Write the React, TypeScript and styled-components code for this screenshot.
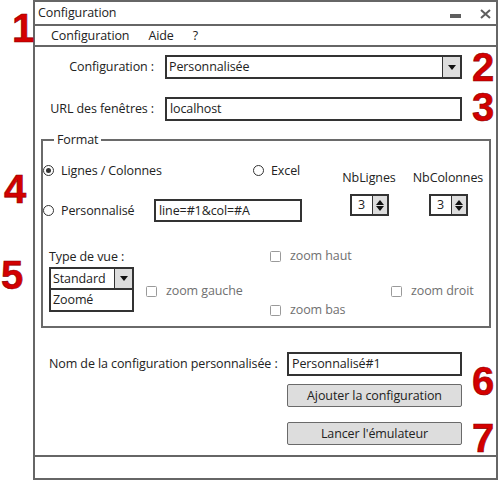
import React from "react";
import styled, { createGlobalStyle } from "styled-components";

const FONT = `"Open Sans", "Liberation Sans", sans-serif`;

const Global = createGlobalStyle`
  html, body { margin: 0; padding: 0; background: #fff; }
  body { font-family: ${FONT}; font-size: 12.5px; letter-spacing: -0.1px; color: #222; }
  * { box-sizing: border-box; }
`;

const Page = styled.div`
  position: relative;
  width: 498px;
  height: 480px;
  overflow: hidden;
`;

const Window = styled.div`
  margin-left: 33px;
  width: 465px;
  height: 480px;
  border: 2px solid #666;
  display: flex;
  flex-direction: column;
  background: #fff;
`;

const TitleBar = styled.div`
  height: 24px;
  border-bottom: 2px solid #666;
  display: flex;
  align-items: center;
  justify-content: space-between;
  padding: 0 5px 0 3px;
`;

const Title = styled.span`
  line-height: 16px;
`;

const WinControls = styled.div`
  display: flex;
  align-items: flex-start;
  gap: 19px;
  height: 22px;
`;

const MinIcon = styled.span`
  display: block;
  width: 11px;
  height: 4px;
  margin-top: 12px;
  background: #5e5e5e;
`;

const CloseIcon = styled.svg`
  display: block;
  margin-top: 7px;
`;

const MenuBar = styled.div`
  height: 21px;
  border-bottom: 2px solid #666;
  display: flex;
  align-items: center;
  gap: 19px;
  padding-left: 16px;
`;

const MenuItem = styled.span`
  line-height: 16px;
`;

const Content = styled.div`
  flex: 1;
  display: flex;
  flex-direction: column;
  padding-top: 8px;
`;

const FormGrid = styled.div`
  display: grid;
  grid-template-columns: 119px 297px;
  column-gap: 11px;
  row-gap: 18px;
  align-items: center;
`;

const Label = styled.label<{ $align?: string }>`
  text-align: ${(p) => p.$align || "right"};
  line-height: 16px;
  white-space: nowrap;
`;

const Select = styled.div`
  height: 24px;
  border: 2px solid #333;
  display: flex;
  background: #fff;
`;

const SelectValue = styled.span`
  flex: 1;
  padding-left: 2px;
  line-height: 20px;
  white-space: nowrap;
  overflow: hidden;
`;

const ArrowBox = styled.span`
  width: 18px;
  background: #ddd;
  border-left: 1px solid #333;
  display: flex;
  align-items: center;
  justify-content: center;
`;

const TextInput = styled.div<{ $w?: number; $h?: number }>`
  width: ${(p) => (p.$w ? `${p.$w}px` : "auto")};
  height: ${(p) => p.$h || 24}px;
  border: 2px solid #333;
  padding-left: 3px;
  line-height: ${(p) => (p.$h || 24) - 4}px;
  background: #fff;
  white-space: nowrap;
  overflow: hidden;
`;

const Group = styled.fieldset`
  margin: 12px 5px 0 6px;
  border: 2px solid #6a6a6a;
  padding: 0 0 7px 0;
  min-width: 0;
`;

const Legend = styled.legend`
  margin-left: 11px;
  padding: 0 3px;
  line-height: 14px;
`;

const Upper = styled.div`
  display: flex;
  align-items: flex-start;
`;

const LeftCol = styled.div`
  width: 296px;
  margin-top: 15px;
  display: flex;
  flex-direction: column;
`;

const RadioRow = styled.div<{ $mt?: number; $h: number }>`
  display: flex;
  align-items: center;
  height: ${(p) => p.$h}px;
  margin-top: ${(p) => p.$mt || 0}px;
`;

const RadioItem = styled.div<{ $w?: number }>`
  display: flex;
  align-items: center;
  width: ${(p) => (p.$w ? `${p.$w}px` : "auto")};
  white-space: nowrap;
`;

const RadioCircle = styled.span<{ $on?: boolean }>`
  width: 11px;
  height: 11px;
  border: 1.5px solid #333;
  border-radius: 50%;
  margin-right: 7px;
  display: flex;
  align-items: center;
  justify-content: center;
  &::after {
    content: "";
    display: ${(p) => (p.$on ? "block" : "none")};
    width: 5px;
    height: 5px;
    border-radius: 50%;
    background: #333;
  }
`;

const RightCol = styled.div`
  display: flex;
  gap: 13px;
  margin-top: 23px;
`;

const SpinGroup = styled.div<{ $w: number }>`
  width: ${(p) => p.$w}px;
  display: flex;
  flex-direction: column;
  align-items: center;
`;

const Spin = styled.div`
  margin-top: 8px;
  width: 39px;
  height: 22px;
  border: 2px solid #333;
  display: flex;
  background: #fff;
`;

const SpinValue = styled.span`
  flex: 1;
  text-align: center;
  line-height: 18px;
`;

const SpinButtons = styled.span`
  width: 15px;
  background: #ddd;
  border-left: 1px solid #333;
  display: flex;
  flex-direction: column;
  align-items: center;
  justify-content: center;
  gap: 1px;
`;

const Lower = styled.div`
  display: grid;
  grid-template-columns: 97px 124px 121px auto;
  grid-template-rows: 14px 56px;
  padding-left: 6px;
  margin-top: 27px;
`;

const Cell = styled.div<{ $col: number; $row: number; $self?: string; $mt?: number; $mb?: number }>`
  grid-column: ${(p) => p.$col};
  grid-row: ${(p) => p.$row};
  align-self: ${(p) => p.$self || "center"};
  margin-top: ${(p) => p.$mt || 0}px;
  margin-bottom: ${(p) => p.$mb || 0}px;
`;

const TypeLabel = styled.span`
  line-height: 14px;
  white-space: nowrap;
`;

const Dropdown = styled.div`
  width: 85px;
  display: flex;
  flex-direction: column;
`;

const DropHead = styled.div`
  height: 23px;
  border: 2px solid #333;
  display: flex;
`;

const DropList = styled.div`
  height: 22px;
  border: 2px solid #333;
  border-top: none;
  padding-left: 2px;
  line-height: 19px;
`;

const CheckItem = styled.div`
  display: flex;
  align-items: center;
  color: #707070;
  white-space: nowrap;
  line-height: 14px;
`;

const CheckBox = styled.span`
  width: 11px;
  height: 11px;
  border: 1.5px solid #9a9a9a;
  border-radius: 1.5px;
  margin-right: 9px;
`;

const Bottom = styled.div`
  margin-top: 24px;
  padding-left: 14px;
  display: grid;
  grid-template-columns: 238px 175px;
  grid-template-rows: 24px 23px 23px;
  row-gap: 8px;
  align-items: center;
`;

const Button = styled.div<{ $mt?: number }>`
  grid-column: 2;
  height: 23px;
  margin-top: ${(p) => p.$mt || 0}px;
  background: #ddd;
  border: 1px solid #6a6a6a;
  border-radius: 2px;
  display: flex;
  align-items: center;
  justify-content: center;
  white-space: nowrap;
`;

const StatusBar = styled.div`
  height: 23px;
  border-top: 2px solid #666;
`;

const Annotation = styled.span<{ $top: number; $left: number }>`
  position: absolute;
  top: ${(p) => p.$top}px;
  left: ${(p) => p.$left}px;
  font-family: "Liberation Sans", Arial, sans-serif;
  font-weight: bold;
  font-size: 40px;
  letter-spacing: 0;
  line-height: 1;
  color: #d40000;
  -webkit-text-stroke: 0.6px #8a0000;
`;

const DownTri = () => (
  <svg width="8" height="5" viewBox="0 0 8 5">
    <path d="M0 0 H8 L4 5 Z" fill="#111" />
  </svg>
);

const UpTri = () => (
  <svg width="8" height="5" viewBox="0 0 8 5">
    <path d="M0 5 H8 L4 0 Z" fill="#111" />
  </svg>
);

const SpinBox = ({ value }: { value: string }) => (
  <Spin>
    <SpinValue>{value}</SpinValue>
    <SpinButtons>
      <UpTri />
      <DownTri />
    </SpinButtons>
  </Spin>
);

const Check = ({ label }: { label: string }) => (
  <CheckItem>
    <CheckBox />
    {label}
  </CheckItem>
);

export default function App() {
  return (
    <Page>
      <Global />
      <Window>
        <TitleBar>
          <Title>Configuration</Title>
          <WinControls>
            <MinIcon />
            <CloseIcon width="11" height="10" viewBox="0 0 11 10">
              <path d="M1 1 L10 9 M10 1 L1 9" stroke="#5e5e5e" strokeWidth="2" />
            </CloseIcon>
          </WinControls>
        </TitleBar>
        <MenuBar>
          <MenuItem>Configuration</MenuItem>
          <MenuItem>Aide</MenuItem>
          <MenuItem>?</MenuItem>
        </MenuBar>
        <Content>
          <FormGrid>
            <Label>Configuration :</Label>
            <Select>
              <SelectValue>Personnalisée</SelectValue>
              <ArrowBox>
                <DownTri />
              </ArrowBox>
            </Select>
            <Label>URL des fenêtres :</Label>
            <TextInput>localhost</TextInput>
          </FormGrid>

          <Group>
            <Legend>Format</Legend>
            <Upper>
              <LeftCol>
                <RadioRow $h={16}>
                  <RadioItem $w={210}>
                    <RadioCircle $on />
                    Lignes / Colonnes
                  </RadioItem>
                  <RadioItem>
                    <RadioCircle />
                    Excel
                  </RadioItem>
                </RadioRow>
                <RadioRow $h={23} $mt={21}>
                  <RadioItem $w={111}>
                    <RadioCircle />
                    Personnalisé
                  </RadioItem>
                  <TextInput $w={148} $h={23}>
                    line=#1&amp;col=#A
                  </TextInput>
                </RadioRow>
              </LeftCol>
              <RightCol>
                <SpinGroup $w={60}>
                  <Label $align="center">NbLignes</Label>
                  <SpinBox value="3" />
                </SpinGroup>
                <SpinGroup $w={72}>
                  <Label $align="center">NbColonnes</Label>
                  <SpinBox value="3" />
                </SpinGroup>
              </RightCol>
            </Upper>

            <Lower>
              <Cell $col={1} $row={1}>
                <TypeLabel>Type de vue :</TypeLabel>
              </Cell>
              <Cell $col={3} $row={1}>
                <Check label="zoom haut" />
              </Cell>
              <Cell $col={1} $row={2} $self="start" $mt={4}>
                <Dropdown>
                  <DropHead>
                    <SelectValue>Standard</SelectValue>
                    <ArrowBox>
                      <DownTri />
                    </ArrowBox>
                  </DropHead>
                  <DropList>Zoomé</DropList>
                </Dropdown>
              </Cell>
              <Cell $col={2} $row={2}>
                <Check label="zoom gauche" />
              </Cell>
              <Cell $col={3} $row={2} $self="end" $mb={2}>
                <Check label="zoom bas" />
              </Cell>
              <Cell $col={4} $row={2}>
                <Check label="zoom droit" />
              </Cell>
            </Lower>
          </Group>

          <Bottom>
            <Label $align="left">Nom de la configuration personnalisée :</Label>
            <TextInput>Personnalisé#1</TextInput>
            <Button>Ajouter la configuration</Button>
            <Button $mt={13}>Lancer l'émulateur</Button>
          </Bottom>
        </Content>
        <StatusBar />
      </Window>

      <Annotation $top={8} $left={12}>1</Annotation>
      <Annotation $top={47} $left={472}>2</Annotation>
      <Annotation $top={87} $left={472}>3</Annotation>
      <Annotation $top={169} $left={4}>4</Annotation>
      <Annotation $top={255} $left={1}>5</Annotation>
      <Annotation $top={361} $left={472}>6</Annotation>
      <Annotation $top={418} $left={472}>7</Annotation>
    </Page>
  );
}
